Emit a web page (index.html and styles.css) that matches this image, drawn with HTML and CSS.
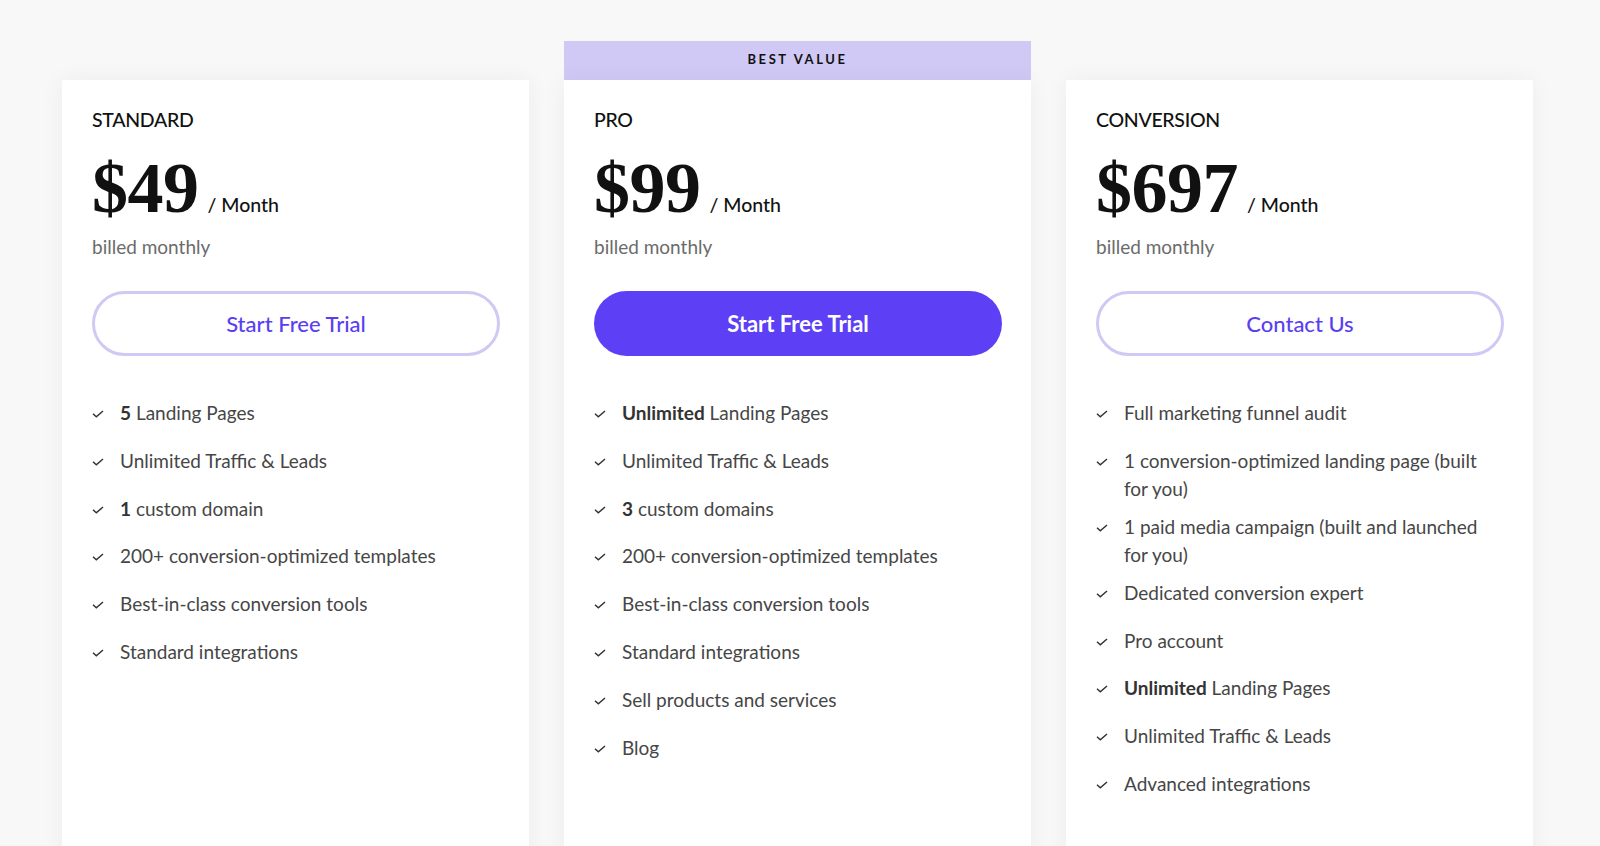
FILE: index.html
```html
<!DOCTYPE html>
<html lang="en">
<head>
<meta charset="utf-8">
<title>Pricing</title>
<link rel="stylesheet" href="styles.css">
</head>
<body>
<main class="plans">
  <section class="plan">
    <div class="card">
      <h2 class="plan-name">STANDARD</h2>
      <div class="price-row"><span class="price">$49</span><span class="per">/ Month</span></div>
      <p class="billed">billed monthly</p>
      <a class="btn btn-outline" href="#">Start Free Trial</a>
      <ul class="features">
        <li><svg class="check" viewBox="0 0 12 8"><path d="M1 3.8 L4.3 6.8 L11 1"/></svg><span><b>5</b> Landing Pages</span></li>
        <li><svg class="check" viewBox="0 0 12 8"><path d="M1 3.8 L4.3 6.8 L11 1"/></svg><span>Unlimited Traffic &amp; Leads</span></li>
        <li><svg class="check" viewBox="0 0 12 8"><path d="M1 3.8 L4.3 6.8 L11 1"/></svg><span><b>1</b> custom domain</span></li>
        <li><svg class="check" viewBox="0 0 12 8"><path d="M1 3.8 L4.3 6.8 L11 1"/></svg><span>200+ conversion-optimized templates</span></li>
        <li><svg class="check" viewBox="0 0 12 8"><path d="M1 3.8 L4.3 6.8 L11 1"/></svg><span>Best-in-class conversion tools</span></li>
        <li><svg class="check" viewBox="0 0 12 8"><path d="M1 3.8 L4.3 6.8 L11 1"/></svg><span>Standard integrations</span></li>
      </ul>
    </div>
  </section>
  <section class="plan plan-featured">
    <div class="badge">BEST VALUE</div>
    <div class="card">
      <h2 class="plan-name">PRO</h2>
      <div class="price-row"><span class="price">$99</span><span class="per">/ Month</span></div>
      <p class="billed">billed monthly</p>
      <a class="btn btn-solid" href="#">Start Free Trial</a>
      <ul class="features">
        <li><svg class="check" viewBox="0 0 12 8"><path d="M1 3.8 L4.3 6.8 L11 1"/></svg><span><b>Unlimited</b> Landing Pages</span></li>
        <li><svg class="check" viewBox="0 0 12 8"><path d="M1 3.8 L4.3 6.8 L11 1"/></svg><span>Unlimited Traffic &amp; Leads</span></li>
        <li><svg class="check" viewBox="0 0 12 8"><path d="M1 3.8 L4.3 6.8 L11 1"/></svg><span><b>3</b> custom domains</span></li>
        <li><svg class="check" viewBox="0 0 12 8"><path d="M1 3.8 L4.3 6.8 L11 1"/></svg><span>200+ conversion-optimized templates</span></li>
        <li><svg class="check" viewBox="0 0 12 8"><path d="M1 3.8 L4.3 6.8 L11 1"/></svg><span>Best-in-class conversion tools</span></li>
        <li><svg class="check" viewBox="0 0 12 8"><path d="M1 3.8 L4.3 6.8 L11 1"/></svg><span>Standard integrations</span></li>
        <li><svg class="check" viewBox="0 0 12 8"><path d="M1 3.8 L4.3 6.8 L11 1"/></svg><span>Sell products and services</span></li>
        <li><svg class="check" viewBox="0 0 12 8"><path d="M1 3.8 L4.3 6.8 L11 1"/></svg><span>Blog</span></li>
      </ul>
    </div>
  </section>
  <section class="plan">
    <div class="card">
      <h2 class="plan-name">CONVERSION</h2>
      <div class="price-row"><span class="price">$697</span><span class="per">/ Month</span></div>
      <p class="billed">billed monthly</p>
      <a class="btn btn-outline" href="#">Contact Us</a>
      <ul class="features">
        <li><svg class="check" viewBox="0 0 12 8"><path d="M1 3.8 L4.3 6.8 L11 1"/></svg><span>Full marketing funnel audit</span></li>
        <li><svg class="check" viewBox="0 0 12 8"><path d="M1 3.8 L4.3 6.8 L11 1"/></svg><span>1 conversion-optimized landing page (built for you)</span></li>
        <li><svg class="check" viewBox="0 0 12 8"><path d="M1 3.8 L4.3 6.8 L11 1"/></svg><span>1 paid media campaign (built and launched for you)</span></li>
        <li><svg class="check" viewBox="0 0 12 8"><path d="M1 3.8 L4.3 6.8 L11 1"/></svg><span>Dedicated conversion expert</span></li>
        <li><svg class="check" viewBox="0 0 12 8"><path d="M1 3.8 L4.3 6.8 L11 1"/></svg><span>Pro account</span></li>
        <li><svg class="check" viewBox="0 0 12 8"><path d="M1 3.8 L4.3 6.8 L11 1"/></svg><span><b>Unlimited</b> Landing Pages</span></li>
        <li><svg class="check" viewBox="0 0 12 8"><path d="M1 3.8 L4.3 6.8 L11 1"/></svg><span>Unlimited Traffic &amp; Leads</span></li>
        <li><svg class="check" viewBox="0 0 12 8"><path d="M1 3.8 L4.3 6.8 L11 1"/></svg><span>Advanced integrations</span></li>
      </ul>
    </div>
  </section>
</main>
</body>
</html>
```
FILE: styles.css
```css
html, body {
  margin: 0;
  padding: 0;
  background: #f8f8f8;
  height: 846px;
  overflow: hidden;
}

body {
  font-family: "Lato", "Liberation Sans", sans-serif;
  color: #111;
}

.plans {
  display: flex;
  align-items: flex-start;
  gap: 35px;
  padding: 41px 0 0 62px;
}

.plan {
  width: 467px;
  padding-top: 39px;
  display: flex;
  flex-direction: column;
}

.plan-featured {
  padding-top: 0;
}

.badge {
  height: 39px;
  box-sizing: border-box;
  padding-bottom: 3px;
  background: #d0c9f5;
  display: flex;
  align-items: center;
  justify-content: center;
  font-size: 13px;
  font-weight: 700;
  letter-spacing: 2.6px;
  color: #111;
}

.card {
  background: #fff;
  height: 820px;
  padding: 27px 29px 0 30px;
  box-shadow: 0 0 22px rgba(0, 0, 0, 0.05);
  box-sizing: border-box;
}

.plan-name {
  margin: 0;
  font-size: 19.5px;
  font-weight: 500;
  line-height: 26px;
  color: #111;
  letter-spacing: -0.3px;
}

.price-row {
  display: flex;
  align-items: baseline;
  gap: 9px;
  margin-top: 19px;
  height: 72px;
}

.price {
  font-family: "Liberation Serif", "Times New Roman", serif;
  font-weight: 700;
  font-size: 72px;
  line-height: 72px;
  letter-spacing: -0.5px;
  color: #111;
}

.per {
  font-size: 19.5px;
  font-weight: 500;
  color: #111;
}

.billed {
  margin: 10px 0 0;
  font-size: 19px;
  line-height: 26px;
  color: #6b6b6b;
}

.btn {
  display: flex;
  align-items: center;
  justify-content: center;
  height: 65px;
  width: 408px;
  margin-top: 31px;
  padding-bottom: 1px;
  border-radius: 33px;
  box-sizing: border-box;
  font-size: 22px;
  font-weight: 500;
  text-decoration: none;
}

.btn-outline {
  border: 3px solid #d0c9f5;
  color: #5a3ff2;
  background: #fff;
}

.btn-solid {
  background: #5d40f6;
  color: #fff;
  font-weight: 700;
}

.features {
  list-style: none;
  margin: 43px 0 0;
  padding: 0;
  width: 400px;
}

.features li {
  display: flex;
  align-items: flex-start;
  gap: 16px;
  min-height: 37.8px;
  margin-bottom: 10px;
  font-size: 19px;
  line-height: 28px;
  color: #464646;
}

.features li span {
  width: 366px;
}

.features b {
  font-weight: 700;
  color: #333;
}

.check {
  flex: none;
  width: 12px;
  height: 8px;
  margin-top: 11px;
  fill: none;
  stroke: #333;
  stroke-width: 1.5;
}
```
